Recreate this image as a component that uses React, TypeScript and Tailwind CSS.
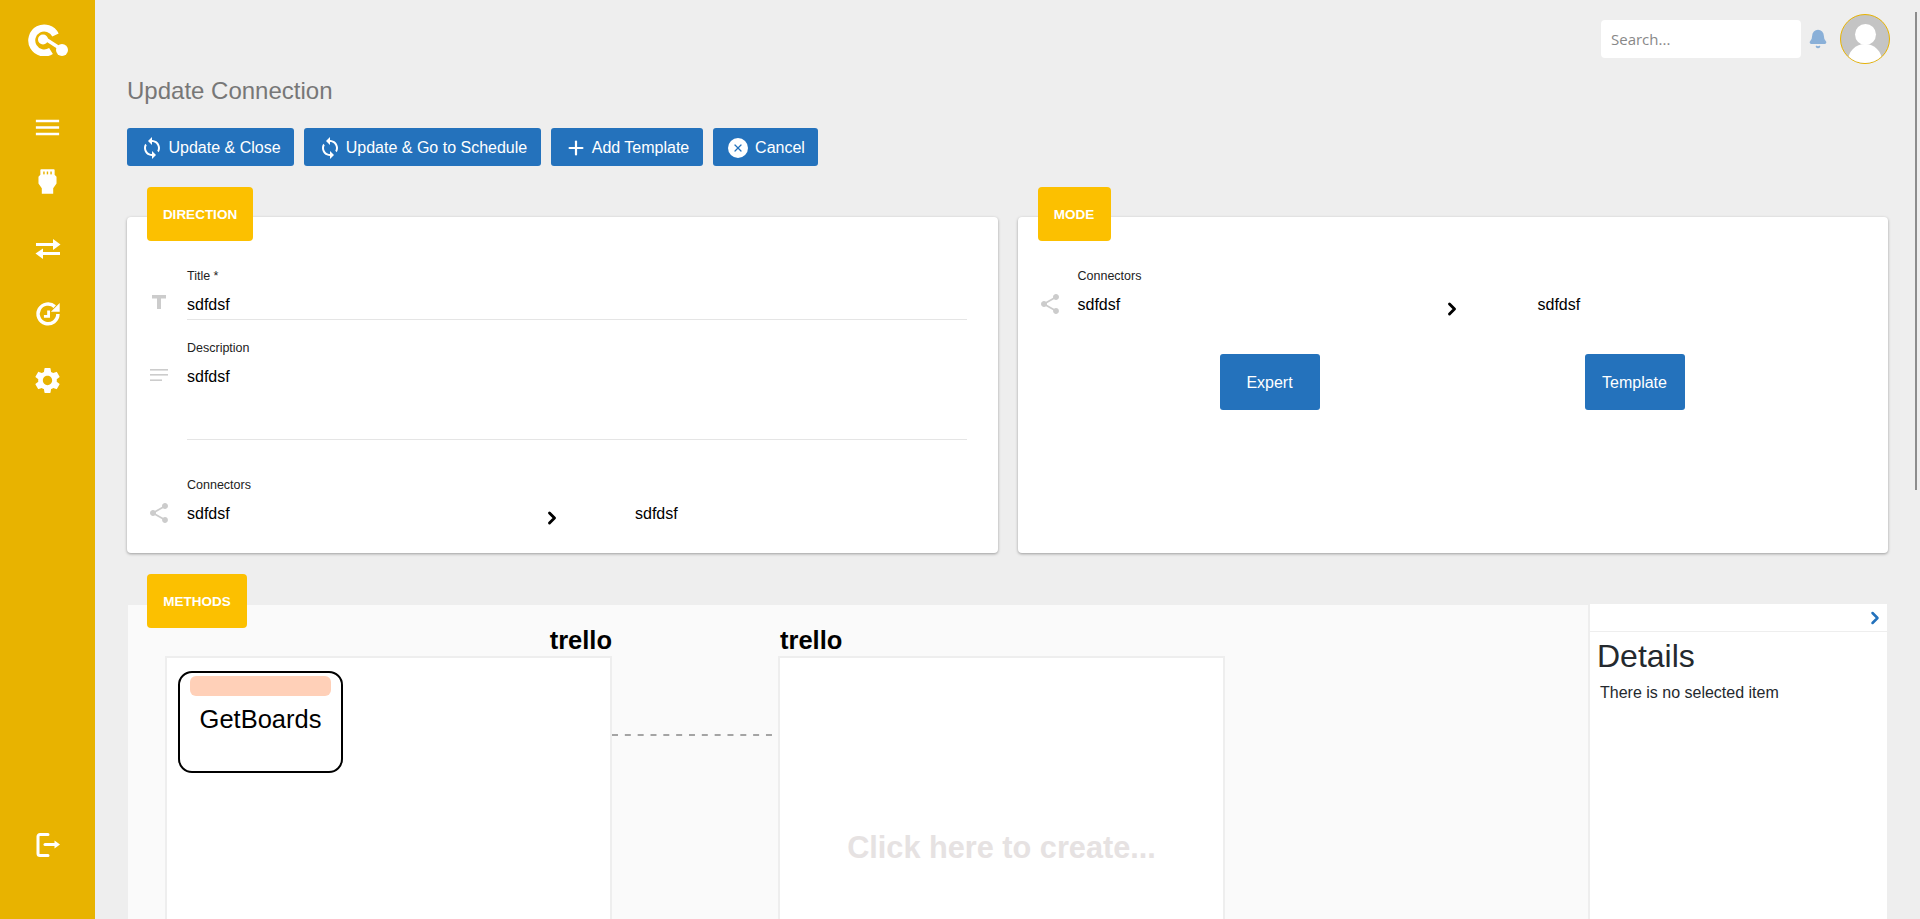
import type { ReactNode } from "react";
import { Plus, ChevronRight, Bell, X } from "lucide-react";
import { MdMenu, MdSettings, MdShare, MdSync } from "react-icons/md";

const font = "font-['Liberation_Sans',Arial,sans-serif]";

function Logo() {
  return (
    <svg viewBox="0 0 40 32" className="w-10 h-8" fill="none">
      <path d="M23 27 A12.500 12.500 0 1 1 27.500 11" stroke="#fff" strokeWidth="7" />
      <circle cx="15" cy="15.500" r="5" fill="#fff" />
      <path d="M16 14 L33 25" stroke="#fff" strokeWidth="3.500" />
      <circle cx="34" cy="26" r="6" fill="#fff" />
    </svg>
  );
}

function PlugIcon() {
  return (
    <svg viewBox="0 0 20 27" className="w-[19px] h-[27px]" fill="#fff">
      <path d="M3.500 0.500h13a1 1 0 0 1 1 1v5l2 2v7l-3.500 5v6h-12v-6L0.500 15.500v-7l2-2v-5a1 1 0 0 1 1-1z" />
      <rect x="5.500" y="3" width="1.500" height="3" fill="#e8b300" />
      <rect x="9.200" y="3" width="1.500" height="3" fill="#e8b300" />
      <rect x="13" y="3" width="1.500" height="3" fill="#e8b300" />
    </svg>
  );
}

function SwapIcon() {
  return (
    <svg viewBox="0 0 26 20" className="w-[26px] h-5" fill="#fff">
      <rect x="1" y="4" width="20" height="3" />
      <path d="M18 0l7.500 5.500L18 11z" />
      <rect x="5" y="13" width="20" height="3" />
      <path d="M8 9.500L0.500 14.500 8 20z" />
    </svg>
  );
}

function ScheduleIcon() {
  return (
    <svg viewBox="0 0 24 24" className="w-7 h-7" fill="none" stroke="#fff" strokeWidth="3">
      <path d="M20.500 12a8.500 8.500 0 1 1-2.700-6.300" />
      <path d="M12.500 9v5h-4" strokeWidth="2.400" />
      <path d="M22 2.500v7.500h-7.500z" fill="#fff" stroke="none" />
    </svg>
  );
}

function LogoutIcon() {
  return (
    <svg viewBox="0 0 24 24" className="w-6 h-6" fill="none" stroke="#fff" strokeWidth="3">
      <path d="M12 1.500H4a2 2 0 0 0-2 2v17a2 2 0 0 0 2 2h8" strokeLinecap="round" />
      <path d="M9 11.500h10" strokeLinecap="round" />
      <path d="M18.500 7.500L24 11.500l-5.500 4z" fill="#fff" stroke="none" />
    </svg>
  );
}

function TitleIcon() {
  return (
    <svg viewBox="0 0 16 16" className="w-4 h-4" fill="#cccccc">
      <path d="M1 1h14v3.500H10V15H6V4.500H1z" />
    </svg>
  );
}

function NotesIcon() {
  return (
    <svg viewBox="0 0 18 12" className="w-[18px] h-3" fill="#cccccc">
      <rect x="0" y="0" width="18" height="1.600" />
      <rect x="0" y="5" width="18" height="1.600" />
      <rect x="0" y="10.400" width="12" height="1.600" />
    </svg>
  );
}

function Sidebar() {
  return (
    <aside className="w-[95px] shrink-0 h-full bg-[#e8b300] flex flex-col items-center">
      <div className="mt-[24px] ml-[1px]"><Logo /></div>
      <div className="mt-[56px]"><MdMenu className="w-[31px] h-[31px] text-white" /></div>
      <div className="mt-[25px]"><PlugIcon /></div>
      <div className="mt-[44px]"><SwapIcon /></div>
      <div className="mt-[41px]"><ScheduleIcon /></div>
      <div className="mt-[37px]"><MdSettings className="w-[31px] h-[31px] text-white" /></div>
      <div className="mt-auto mb-[62px]"><LogoutIcon /></div>
    </aside>
  );
}

function TopBtn({ icon, label, width, gap }: { icon: ReactNode; label: string; width: string; gap: string }) {
  return (
    <button className={`${width} ${gap} h-[38px] pt-px bg-[#2472bc] rounded-[3px] text-white text-base flex items-center justify-center`}>
      {icon}
      <span>{label}</span>
    </button>
  );
}

function Tab({ label, width, left = "left-[20px]", top = "-top-[30px]" }: { label: string; width: string; left?: string; top?: string }) {
  return (
    <div className={`${width} ${left} ${top} absolute h-[54px] pt-[3px] bg-[#fcc000] rounded-[4px] text-white font-bold text-[13.500px] flex items-center justify-center`}>
      {label}
    </div>
  );
}

function ConnectorRow({ firstWidth, secondGap }: { firstWidth: string; secondGap: string }) {
  return (
    <div className="flex items-start">
      <div className="w-[60px] pt-[24px] pl-[20px] shrink-0"><MdShare className="w-6 h-6 text-[#cccccc]" /></div>
      <div className="flex-1">
        <div className="text-[12.500px] leading-4 text-[#222]">Connectors</div>
        <div className="flex items-start mt-[9px] text-base text-black">
          <span className={firstWidth}>sdfdsf</span>
          <ChevronRight className="w-5 h-5 mt-[6px] text-black" strokeWidth={3.5} />
          <span className={secondGap}>sdfdsf</span>
        </div>
      </div>
    </div>
  );
}

function CanvasColumn({ align, children }: { align: string; children: ReactNode }) {
  return (
    <div className="w-[447px] shrink-0">
      <div className={`${align} h-[51px] flex items-end text-[25.500px] leading-[32px] font-bold text-black`}>trello</div>
      <div className="h-[360px] bg-white border-2 border-[#eeeeee]">{children}</div>
    </div>
  );
}

export default function App() {
  return (
    <div className={`${font} relative flex h-screen overflow-hidden bg-[#eeeeee]`}>
      <Sidebar />
      <main className="flex-1 min-w-0 pl-[32px] pr-[32px]">
        <div className="h-[72px] flex items-start justify-end pt-[20px] -mr-[2px]">
          <div className="w-[200px] h-[38px] rounded-[4px] bg-white flex items-center pl-[10px] font-['Open_Sans',sans-serif] text-[15px] text-[#888]">Search...</div>
          <Bell className="w-5 h-[22px] mt-[8px] ml-[7px] text-[#8ab0d8]" fill="#8ab0d8" />
          <div className="w-[50px] h-[50px] -mt-[6px] ml-[12px] rounded-full border border-[#e8b300] bg-[#c4c4c4] overflow-hidden flex flex-col items-center">
            <div className="w-[21px] h-[21px] rounded-full bg-white mt-[9px] shrink-0" />
            <div className="w-[34px] h-[34px] rounded-full bg-white -mt-[1px] shrink-0" />
          </div>
        </div>
        <h1 className="text-2xl leading-[26px] text-[#777] mt-[6px]">Update Connection</h1>
        <div className="flex gap-[10px] mt-[24px]">
          <TopBtn width="w-[167px]" gap="gap-[4px]" icon={<MdSync className="w-6 h-6" />} label="Update & Close" />
          <TopBtn width="w-[237px]" gap="gap-[4px]" icon={<MdSync className="w-6 h-6" />} label="Update & Go to Schedule" />
          <TopBtn width="w-[152px]" gap="gap-[5px]" icon={<Plus className="w-[22px] h-[22px]" strokeWidth={2.4} />} label="Add Template" />
          <TopBtn
            width="w-[105px] pl-[2px]"
            gap="gap-[7px]"
            icon={
              <span className="w-5 h-5 rounded-full bg-white flex items-center justify-center">
                <X className="w-3 h-3 text-[#2472bc]" strokeWidth={2.4} />
              </span>
            }
            label="Cancel"
          />
        </div>
        <div className="grid grid-cols-2 gap-[20px] mt-[51px]">
          <section className="relative h-[336px] bg-white rounded-[4px] shadow-[0_1px_3px_rgba(0,0,0,0.35)]">
            <Tab label="DIRECTION" width="w-[106px]" />
            <div className="flex pt-[51px]">
              <div className="w-[60px] pt-[26px] pl-[24px] shrink-0"><TitleIcon /></div>
              <div className="w-[780px] border-b border-[#e5e5e5] h-[52px]">
                <div className="text-[12.500px] leading-4 text-[#222]">Title *</div>
                <div className="mt-[9px] text-base text-black">sdfdsf</div>
              </div>
            </div>
            <div className="flex pt-[20px]">
              <div className="w-[60px] pt-[29px] pl-[23px] shrink-0"><NotesIcon /></div>
              <div className="w-[780px] border-b border-[#e5e5e5] h-[100px]">
                <div className="text-[12.500px] leading-4 text-[#222]">Description</div>
                <div className="mt-[9px] text-base text-black">sdfdsf</div>
              </div>
            </div>
            <div className="pt-[37px]">
              <ConnectorRow firstWidth="w-[355px]" secondGap="ml-[73px]" />
            </div>
          </section>
          <section className="relative h-[336px] bg-white rounded-[4px] shadow-[0_1px_3px_rgba(0,0,0,0.35)]">
            <Tab label="MODE" width="w-[73px]" />
            <div className="pt-[51px]">
              <ConnectorRow firstWidth="w-[364px]" secondGap="ml-[76px]" />
            </div>
            <div className="flex mt-[35px] ml-[202px] gap-[265px]">
              <button className="w-[100px] h-[56px] pt-px bg-[#2472bc] rounded-[3px] text-white text-base">Expert</button>
              <button className="w-[100px] h-[56px] pt-px bg-[#2472bc] rounded-[3px] text-white text-base">Template</button>
            </div>
          </section>
        </div>
        <section className="relative mt-[52px] ml-px mr-px h-[400px] bg-[#fafafa] flex">
          <Tab label="METHODS" width="w-[100px]" left="left-[19px]" top="-top-[31px]" />
          <div className="flex-1 flex pl-[37px]">
            <CanvasColumn align="justify-end">
              <div className="pt-[13px] pl-[11px]">
                <div className="w-[165px] h-[102px] border-[2.5px] border-black rounded-[14px] px-[10px] pt-[3px] bg-white text-center">
                  <div className="h-[20px] rounded-[6px] bg-[#ffd0b8]" />
                  <div className="mt-[4px] text-[25.500px] leading-[38px] text-black">GetBoards</div>
                </div>
              </div>
            </CanvasColumn>
            <div className="w-[166px] shrink-0 pt-[129px]">
              <svg width="160" height="2" className="block"><line x1="0" y1="1" x2="160" y2="1" stroke="#888" strokeWidth="1.500" strokeDasharray="6 6.830" /></svg>
            </div>
            <CanvasColumn align="pl-[2px]">
              <div className="h-full flex justify-center pt-[170px] text-[30.700px] leading-[40px] font-bold text-[#e6e2e2]">Click here to create...</div>
            </CanvasColumn>
          </div>
          <div className="w-[299px] -mt-px bg-white border-l-2 border-[#eeeeee]">
            <div className="h-[28px] border-b border-[#eeeeee] flex justify-end items-center pr-[2px]"><ChevronRight className="w-5 h-5 text-[#2472bc]" strokeWidth={3} /></div>
            <div className="px-[7px] text-[32px] text-[#24292e]">Details</div>
            <div className="px-[10px] pt-px text-base text-[#24292e]">There is no selected item</div>
          </div>
        </section>
      </main>
      <div className="absolute right-[3px] top-[12px] h-[478px] w-[2px] bg-[#8c8c8c]" />
    </div>
  );
}
